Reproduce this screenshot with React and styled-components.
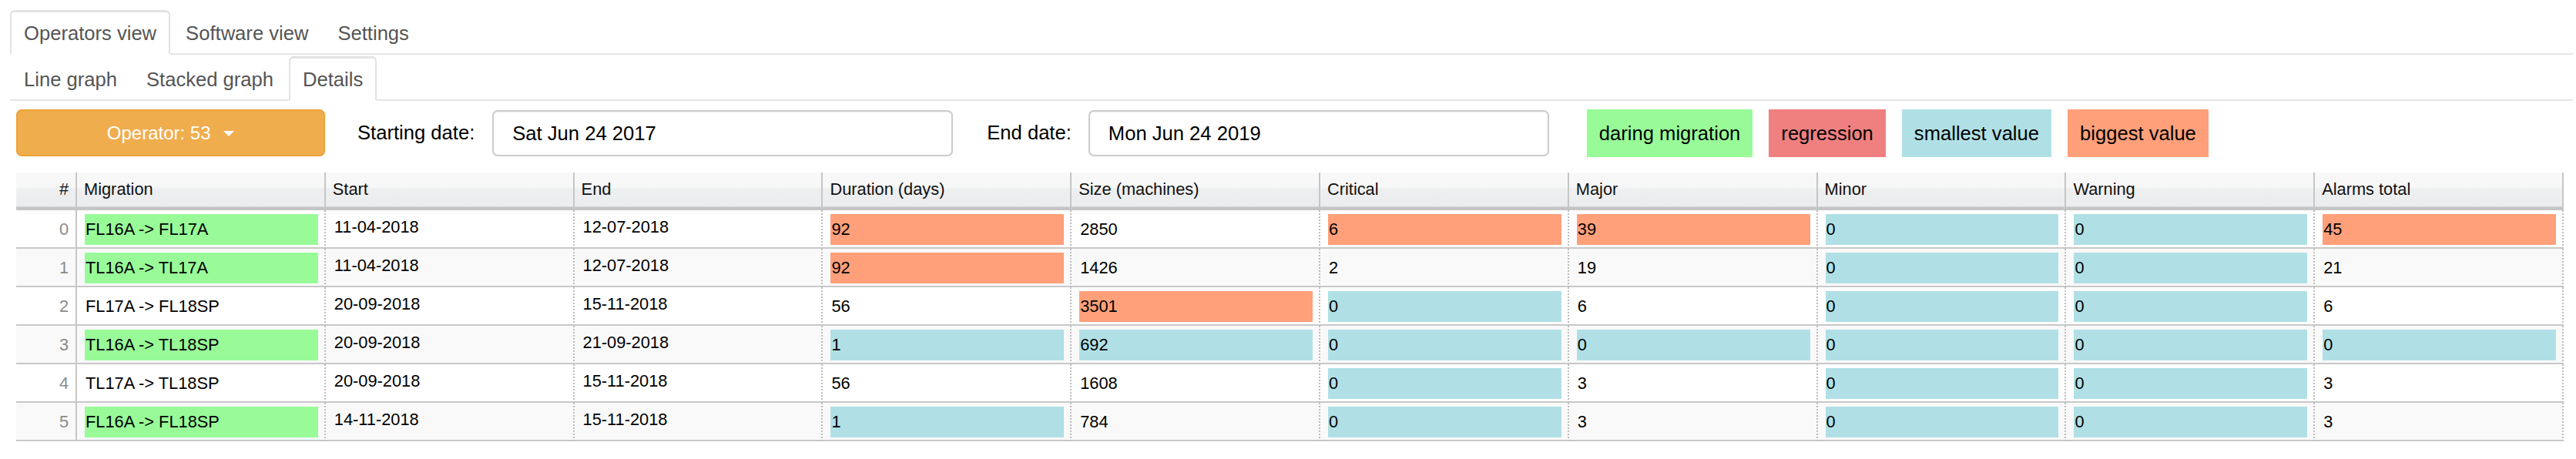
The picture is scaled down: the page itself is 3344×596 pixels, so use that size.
import React from "react";
import styled, { createGlobalStyle } from "styled-components";

const GREEN = "#98fb98";
const RED = "#f08080";
const BLUE = "#b0e0e6";
const ORANGE = "#ffa07a";

const GlobalStyle = createGlobalStyle`
  * { box-sizing: border-box; }
  body {
    margin: 0;
    background: #fff;
    font-family: "Liberation Sans", Arial, sans-serif;
    color: #000;
  }
`;

const columns = [
  "Migration",
  "Start",
  "End",
  "Duration (days)",
  "Size (machines)",
  "Critical",
  "Major",
  "Minor",
  "Warning",
  "Alarms total",
];

// each cell: [value, mark] where mark is g(reen) / b(ig) / s(mall) or empty
const rows = [
  [["FL16A -> FL17A", "g"], ["11-04-2018"], ["12-07-2018"], ["92", "b"], ["2850"], ["6", "b"], ["39", "b"], ["0", "s"], ["0", "s"], ["45", "b"]],
  [["TL16A -> TL17A", "g"], ["11-04-2018"], ["12-07-2018"], ["92", "b"], ["1426"], ["2"], ["19"], ["0", "s"], ["0", "s"], ["21"]],
  [["FL17A -> FL18SP"], ["20-09-2018"], ["15-11-2018"], ["56"], ["3501", "b"], ["0", "s"], ["6"], ["0", "s"], ["0", "s"], ["6"]],
  [["TL16A -> TL18SP", "g"], ["20-09-2018"], ["21-09-2018"], ["1", "s"], ["692", "s"], ["0", "s"], ["0", "s"], ["0", "s"], ["0", "s"], ["0", "s"]],
  [["TL17A -> TL18SP"], ["20-09-2018"], ["15-11-2018"], ["56"], ["1608"], ["0", "s"], ["3"], ["0", "s"], ["0", "s"], ["3"]],
  [["FL16A -> FL18SP", "g"], ["14-11-2018"], ["15-11-2018"], ["1", "s"], ["784"], ["0", "s"], ["3"], ["0", "s"], ["0", "s"], ["3"]],
];

const markColor = { g: GREEN, b: ORANGE, s: BLUE };

const legend = [
  ["daring migration", GREEN],
  ["regression", RED],
  ["smallest value", BLUE],
  ["biggest value", ORANGE],
];

export default function App() {
  return (
    <Page>
      <GlobalStyle />
      <NavTabs>
        <Tab $active>Operators view</Tab>
        <Tab>Software view</Tab>
        <Tab>Settings</Tab>
      </NavTabs>
      <NavTabs $sub>
        <Tab>Line graph</Tab>
        <Tab>Stacked graph</Tab>
        <Tab $active>Details</Tab>
      </NavTabs>

      <Content>
        <Controls>
          <OperatorButton type="button">
            Operator: 53 <Caret />
          </OperatorButton>
          <FieldLabel $left={42} $right={23}>Starting date:</FieldLabel>
          <DateInput readOnly value="Sat Jun 24 2017" />
          <FieldLabel $left={44} $right={22}>End date:</FieldLabel>
          <DateInput readOnly value="Mon Jun 24 2019" />
          <Legend>
            {legend.map(([label, color]) => (
              <LegendItem key={label} $color={color}>
                {label}
              </LegendItem>
            ))}
          </Legend>
        </Controls>

        <Grid>
          <HeaderCell $num>#</HeaderCell>
          {columns.map((c) => (
            <HeaderCell key={c}>{c}</HeaderCell>
          ))}
          {rows.map((row, i) => (
            <React.Fragment key={i}>
              <RowHead $odd={i % 2 === 1}>{i}</RowHead>
              {row.map(([value, mark], j) => (
                <Cell key={j} $odd={i % 2 === 1}>
                  <Mark $color={markColor[mark]} $date={j === 1 || j === 2}>
                    {value}
                  </Mark>
                </Cell>
              ))}
            </React.Fragment>
          ))}
        </Grid>
      </Content>
    </Page>
  );
}

const Page = styled.div`
  padding: 13px 4px 0 13px;
`;

const NavTabs = styled.ul`
  display: flex;
  list-style: none;
  margin: ${(p) => (p.$sub ? "2px" : "0")} 0 0;
  padding: 0;
  border-bottom: 2px solid #e5e5e5;
`;

const Tab = styled.li`
  margin: 0 2px -2px 0;
  padding: 9px 16px 8px;
  line-height: 36px;
  font-size: 25.6px;
  color: #555;
  border: 2px solid ${(p) => (p.$active ? "#e2e2e2" : "transparent")};
  border-top-width: 3px;
  border-bottom-color: transparent;
  border-radius: 6px 6px 0 0;
  background: ${(p) => (p.$active ? "#fff" : "transparent")};
  cursor: pointer;
`;

const Content = styled.div`
  padding: 0 12px 0 8px;
`;

const Controls = styled.div`
  display: flex;
  align-items: flex-start;
  margin-top: 11px;
  height: 62px;
`;

const OperatorButton = styled.button`
  width: 401px;
  height: 61px;
  display: flex;
  align-items: center;
  justify-content: center;
  background: #f0ad4e;
  border: 2px solid #eea236;
  border-radius: 7px;
  color: #fff;
  font-family: inherit;
  font-size: 24px;
  padding: 0;
  white-space: pre;
`;

const Caret = styled.span`
  display: inline-block;
  margin-left: 10px;
  margin-top: 2px;
  border-top: 7px solid #fff;
  border-left: 7px solid transparent;
  border-right: 7px solid transparent;
`;

const FieldLabel = styled.label`
  margin: 0 ${(p) => p.$right}px 0 ${(p) => p.$left}px;
  line-height: 61px;
  font-size: 25.6px;
  color: #000;
  white-space: nowrap;
`;

const DateInput = styled.input`
  width: 598px;
  height: 60px;
  margin-top: 1px;
  padding: 0 0 0 24px;
  border: 2px solid #ccc;
  border-radius: 7px;
  box-shadow: inset 0 1px 2px rgba(0, 0, 0, 0.06);
  font-family: inherit;
  font-size: 25.6px;
  color: #000;
  outline: none;
`;

const Legend = styled.div`
  display: flex;
  gap: 21px;
  margin-left: 49px;
`;

const LegendItem = styled.span`
  height: 62px;
  line-height: 62px;
  padding: 0 16px;
  background: ${(p) => p.$color};
  font-size: 25.6px;
  color: #000;
  white-space: nowrap;
`;

const Grid = styled.div`
  display: grid;
  grid-template-columns: 79px repeat(10, minmax(0, 1fr));
  margin-top: 20px;
  font-size: 21.8px;
`;

const HeaderCell = styled.div`
  height: 49px;
  padding: ${(p) => (p.$num ? "0 9px 0 0" : "0 0 0 9px")};
  text-align: ${(p) => (p.$num ? "right" : "left")};
  line-height: 44px;
  color: #111;
  background: linear-gradient(
    to bottom,
    #f8f8f8 0%,
    #f7f7f7 42%,
    #eeeff0 48%,
    #ebecee 100%
  );
  border-right: 2px solid #c6c6c6;
  border-bottom: 4px solid #c4c4c4;
  box-shadow: inset 0 -1px 0 #d6d6d6;
  white-space: nowrap;
  overflow: hidden;
`;

const RowHead = styled.div`
  height: 50px;
  padding: 5px 9px 0 0;
  text-align: right;
  line-height: 40px;
  color: #8a8a8a;
  background: ${(p) => (p.$odd ? "#f9f9f9" : "#fff")};
  border-right: 2px solid #c6c6c6;
  border-bottom: 2px solid #c8c8c8;
`;

const Cell = styled.div`
  height: 50px;
  padding: 5px 8px 0 10px;
  background: ${(p) => (p.$odd ? "#f9f9f9" : "#fff")};
  border-right: 2px dotted #bdbdbd;
  border-bottom: 2px solid #c8c8c8;
  overflow: hidden;
`;

const Mark = styled.div`
  height: 40px;
  line-height: ${(p) => (p.$date ? "34px" : "40px")};
  padding-left: 1px;
  background: ${(p) => p.$color || "transparent"};
  color: #000;
  white-space: nowrap;
`;
